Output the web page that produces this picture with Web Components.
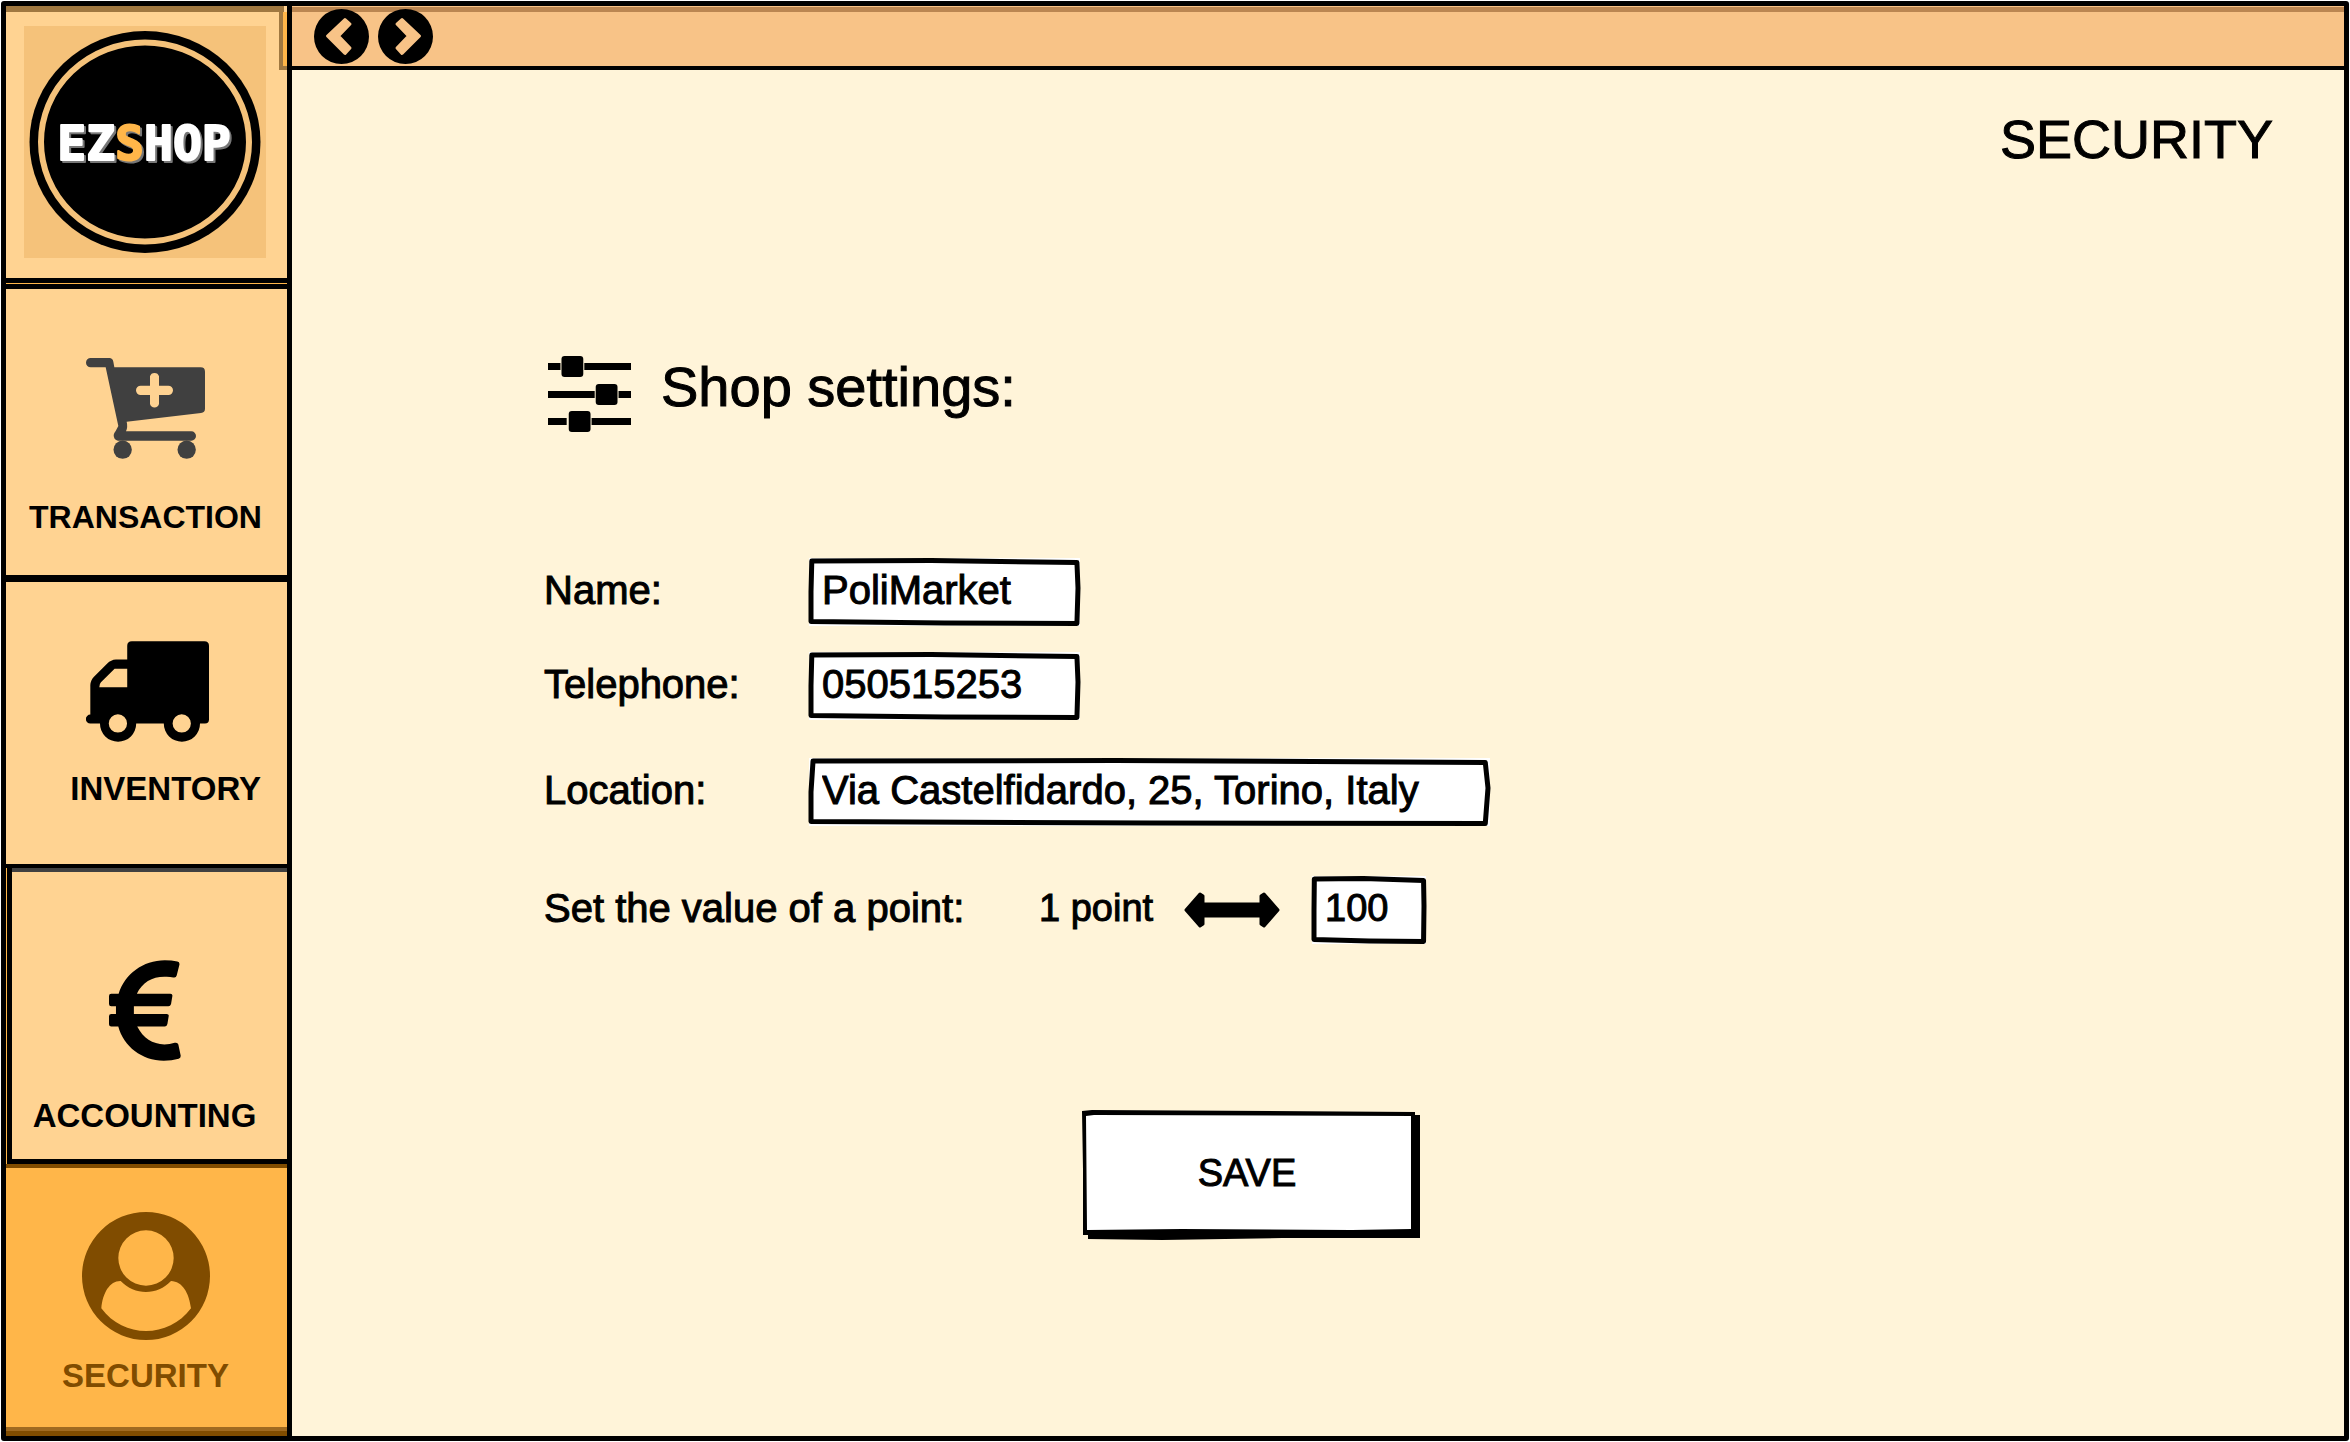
<!DOCTYPE html>
<html lang="en">
<head>
<meta charset="utf-8">
<title>EZShop - Security</title>
<style>
  body { margin: 0; background: #fff; color: #000; font-family: "Liberation Sans", Arial, sans-serif; }
</style>
</head>
<body>
<app-shell>
  <side-bar slot="side">
    <shop-logo></shop-logo>
    <nav-tile class="transaction" label="TRANSACTION">
      <svg width="119" height="101" viewBox="258 265 357 303" fill="#404040" aria-hidden="true">
        <path fill-rule="evenodd" d="M272 265H328Q338 265 340 276L343 293H602Q615 293 615 306V417Q615 428 603 430L380 456Q384 472 378 485H574A14 14 0 0 1 574 513H354Q341 511 341 496Q342 490 347 484L355 469L317 293H272A14 14 0 0 1 272 265ZM450 320V348H422A14 14 0 0 0 422 376H450V403A14 14 0 0 0 477 403V376H505A14 14 0 0 0 505 348H477V320A14 14 0 0 0 450 320Z"/>
        <circle cx="368" cy="540" r="27.500"/><circle cx="560" cy="540" r="27.500"/>
      </svg>
    </nav-tile>
    <nav-tile class="inventory" label="INVENTORY">
      <svg width="123" height="101" viewBox="260 211 370 303" aria-hidden="true">
        <path fill-rule="evenodd" d="M398 211H616Q630 211 630 225V447Q630 459 618 459H603A54.500 54.500 0 0 1 494 459H411A54.500 54.500 0 0 1 302 459H273A13.500 13.500 0 0 1 273 432V343Q274 328 284 318L324 278Q335 267 350 266H384V225Q384 211 398 211ZM384 294H346L305 335Q300 340 300 350H384ZM356 431A27.500 27.500 0 1 0 356 486A27.500 27.500 0 1 0 356 431ZM548 431A27.500 27.500 0 1 0 548 486A27.500 27.500 0 1 0 548 431Z"/>
      </svg>
    </nav-tile>
    <nav-tile class="accounting" label="ACCOUNTING">
      <svg width="72" height="101" viewBox="327 327 217 303" aria-hidden="true">
        <path d="M495 327Q516 327 533 331Q541 333 539 341L531 373Q529 381 521 379Q508 376 494 377C456 377 427 395 411 428H512Q519 428 518 435L514 459Q512 466 506 466H402V489H501Q508 489 507 495L503 519Q501 527 495 527H412C430 562 458 580 494 581Q510 581 525 576Q534 574 536 581L543 614Q544 621 537 624Q516 630 492 630C426 630 371 587 355 527H334Q327 527 327 520V496Q327 489 334 489H348V466H334Q327 466 327 459V435Q327 428 334 428H356C374 369 430 327 495 327Z"/>
      </svg>
    </nav-tile>
    <nav-tile class="security" label="SECURITY" current>
      <svg width="128" height="128" viewBox="246 216 384 384" fill="#804c00" aria-hidden="true">
        <path fill-rule="evenodd" d="M438 216A192 192 0 1 1 438 600A192 192 0 1 1 438 216ZM438 271A82.500 82.500 0 1 0 438 437A82.500 82.500 0 1 0 438 271ZM362 423C330 422 308 458 304 505C370 596 506 596 573 505C567 458 547 424 513 423C472 467 404 467 362 423Z"/>
      </svg>
    </nav-tile>
  </side-bar>
  <top-bar slot="top"></top-bar>
  <settings-page slot="page"></settings-page>
</app-shell>

<script>
const define = (name, html, setup) => {
  const template = document.createElement('template');
  template.innerHTML = html;
  customElements.define(name, class extends HTMLElement {
    constructor() {
      super();
      this.attachShadow({ mode: 'open' }).append(template.content.cloneNode(true));
    }
    connectedCallback() { if (setup) setup(this, this.shadowRoot); }
  });
};

define('app-shell', `
  <style>
    :host { display: flex; box-sizing: border-box; min-height: 100vh; padding: 1px; }
    .frame { flex: 1; display: flex; border: 5px solid #000; border-radius: 3px; background: #fff4d9; }
    .column { flex: 1; min-width: 0; display: flex; flex-direction: column; }
    slot[name=side], slot[name=top], slot[name=page] { display: contents; }
  </style>
  <div class="frame">
    <slot name="side"></slot>
    <div class="column"><slot name="top"></slot><slot name="page"></slot></div>
  </div>`);

define('side-bar', `
  <style>
    :host { box-sizing: border-box; width: 286px; flex: none; display: flex; border-right: 5px solid #000; background: #ffb649; }
    nav { flex: 1; display: flex; flex-direction: column; }
  </style>
  <nav aria-label="Sections"><slot></slot></nav>`);

define('shop-logo', `
  <style>
    :host { position: relative; box-sizing: border-box; height: 277px; display: flex; justify-content: center; align-items: flex-start;
      padding: 20px 3px 0 0; background: #ffd392; border-bottom: 5px solid #000; }
    .overlap { position: absolute; top: 0; left: 0; right: 3px; height: 6px; background: #a07840; }
    .corner { position: absolute; top: 6px; right: 0; width: 8px; height: 58px; box-sizing: border-box;
      border-left: 4px solid #a07840; border-bottom: 4px solid #a07840; background: #ffb649; }
    .mark { background: #f5c27a; display: block; }
    text { font: 700 48px "DejaVu Sans Mono", monospace; stroke-width: 2px; stroke-linejoin: round; }
  </style>
  <svg class="mark" width="242" height="232" viewBox="0 0 242 232" role="img" aria-label="EZSHOP">
    <ellipse cx="121" cy="116" rx="115.500" ry="111"/>
    <ellipse cx="121" cy="116" rx="104" ry="99.500" fill="none" stroke="#f5c27a" stroke-width="6"/>
    <text x="120" y="134" text-anchor="middle" fill="#fff" stroke="#fff" style="filter: drop-shadow(2px 2px 0 #777)">EZ<tspan fill="#ffb649" stroke="#ffb649">S</tspan>HOP</text>
  </svg>
  <div class="overlap"></div><div class="corner"></div>`);

define('nav-tile', `
  <style>
    :host { box-sizing: border-box; flex: none; display: flex; background: #ffd392; }
    a { flex: 1; box-sizing: border-box; display: flex; flex-direction: column; align-items: center; color: #000; text-decoration: none; }
    span { font-size: 33px; line-height: 36px; font-weight: 700; }
    :host(.transaction) { height: 298px; border: solid #000; border-width: 5px 0 7px; margin-top: 1px; }
    :host(.transaction) a { padding: 69px 2px 0 0; gap: 40px; }
    :host(.transaction) span { font-size: 32px; }
    :host(.inventory) { height: 286px; border-bottom: 4px solid #000; }
    :host(.inventory) a { padding: 59px 0 0 2px; gap: 29px; }
    :host(.inventory) span { align-self: flex-end; padding-right: 26px; }
    :host(.accounting) { height: 296px; margin-left: 1px; border: solid #000; border-width: 0 0 5px 5px; }
    :host(.accounting) a { padding: 88px 10px 0 0; gap: 37px; border-top: 4px solid #404040; }
    :host(.security) { flex: 1; background: #ffb649; border: solid #804c00; border-width: 4px 0 5px; }
    :host(.security) a { padding: 44px 2px 0 0; gap: 18px; color: #804c00; border-bottom: 4px solid #a06a20; }
  </style>
  <a href="#"><slot></slot><span></span></a>`,
  (host, root) => {
    root.querySelector('span').textContent = host.getAttribute('label');
    if (host.hasAttribute('current')) root.querySelector('a').setAttribute('aria-current', 'page');
  });

define('top-bar', `
  <style>
    :host { box-sizing: border-box; flex: none; height: 64px; display: flex; align-items: center; gap: 9px; padding-left: 22px;
      background: linear-gradient(#f8c387 1px, #bb8651 1px, #bb8651 6px, #f8c387 6px); border-bottom: 4px solid #000; }
    button { width: 55px; height: 55px; padding: 0; border: 0; background: none; cursor: pointer; }
    svg { display: block; }
  </style>
  <button type="button" aria-label="Back"><svg width="55" height="55" viewBox="0 0 55 55"><circle cx="27.500" cy="27.500" r="27.500"/><path d="M31 10.500L36 15L24.500 27L36 39L31 44.500L13.500 27Z" fill="#f8c387" stroke="#f8c387" stroke-width="3" stroke-linejoin="round"/></svg></button>
  <button type="button" aria-label="Forward"><svg width="55" height="55" viewBox="0 0 55 55"><circle cx="27.500" cy="27.500" r="27.500"/><path d="M24 10.500L19 15L30.500 27L19 39L24 44.500L41.500 27Z" fill="#f8c387" stroke="#f8c387" stroke-width="3" stroke-linejoin="round"/></svg></button>`);

/* A white box with a hand-inked outline; the text box shares its grid cell. */
const inkBox = `
  .ink { display: grid; height: 68px; width: var(--box, 271px); max-width: 100%; flex: none; background: #fff; }
  .ink > * { grid-area: 1 / 1; height: 68px; box-sizing: border-box; min-width: 0; }
  .ink svg { width: calc(100% - 4px); margin: 0 2px; overflow: visible; }
  .ink path { fill: none; stroke: #000; stroke-width: 5px; stroke-linejoin: round; vector-effect: non-scaling-stroke; }
  .ink input { width: 100%; border: 0; margin: 0; background: none; padding: 0 10px 4px 13px; font: inherit; color: inherit; outline: none; -webkit-text-stroke: inherit; }
  label, span { line-height: 64px; white-space: nowrap; }
`;
const inkOutline = `
  <svg viewBox="0 0 100 68" preserveAspectRatio="none" aria-hidden="true">
    <path d="M0.300 3L45 2.500L99.600 4.500L100 30L99.600 65.500L50 65L0 63.500L0 34Z"/>
  </svg>`;

define('ink-field', `
  <style>
    :host { display: flex; align-items: flex-start; font-size: 40px; -webkit-text-stroke: 1px #000; }
    label { width: 265px; flex: none; }
    ${inkBox}
  </style>
  <label for="value"></label>
  <div class="ink">${inkOutline}<input id="value" type="text"></div>`,
  (host, root) => {
    root.querySelector('label').textContent = host.getAttribute('label');
    root.querySelector('input').value = host.getAttribute('value');
  });

define('point-field', `
  <style>
    :host { display: flex; align-items: flex-start; font-size: 40px; -webkit-text-stroke: 1px #000; --box: 114px; }
    label { width: 495px; flex: none; }
    span { width: 145px; font-size: 38px; }
    .arrow { align-self: center; margin-right: 32px; }
    .ink { font-size: 38px; }
    ${inkBox}
  </style>
  <label for="value">Set the value of a point:</label>
  <span>1 point</span>
  <svg class="arrow" width="96" height="36" viewBox="0 0 96 36" aria-hidden="true"><path stroke="#000" stroke-width="3" stroke-linejoin="round" d="M2 18L16 2L19 4V12H77V4L80 2L94 18L80 34L77 32V24H19V32L16 34Z"/></svg>
  <div class="ink">${inkOutline}<input id="value" type="text" value="100"></div>`);

define('save-button', `
  <style>
    :host { display: block; width: 338px; }
    button { display: grid; width: 100%; height: 130px; padding: 0; border: 0; background: none; color: #000;
      font: 38px "Liberation Sans", Arial, sans-serif; -webkit-text-stroke: 1px #000; cursor: pointer; }
    button > * { grid-area: 1 / 1; width: 100%; }
    span { box-sizing: border-box; height: 130px; line-height: 126px; padding-right: 8px; text-align: center; }
  </style>
  <button type="button">
    <svg height="130" viewBox="0 0 338 130" preserveAspectRatio="none" aria-hidden="true">
      <path d="M0 1L10 0L333 2V5H338V128L200 128L80 130L6 129V125H1L1 60Z"/>
      <path fill="#fff" d="M4 6L12 5L329 6V119L270 120L100 119L5 120Z"/>
    </svg>
    <span><slot></slot></span>
  </button>`);

define('settings-page', `
  <style>
    :host { flex: 1; display: block; }
    main { display: flex; flex-direction: column; padding: 38px 71px 40px 252px; }
    h1, h2 { margin: 0; line-height: 62px; font-weight: 400; -webkit-text-stroke: 1px #000; }
    h1 { font-size: 54px; text-align: right; }
    h2 { font-size: 56px; }
    header { display: flex; align-items: flex-start; gap: 30px; margin-top: 186px; padding-left: 4px; }
    form { display: flex; flex-direction: column; margin-top: 126px; }
    .phone { margin-top: 26px; }
    .place { margin-top: 38px; --box: 681px; }
    point-field { margin-top: 50px; }
    save-button { margin: 166px 0 0 538px; }
  </style>
  <main>
    <h1>SECURITY</h1>
    <header>
      <svg width="83" height="76" viewBox="0 0 80 76" preserveAspectRatio="none" aria-hidden="true">
        <path d="M0 7H12V14H0ZM35 7H80V14H35ZM0 35H45V42H0ZM68 35H80V42H68ZM0 62H18V69H0ZM42 62H80V69H42Z"/>
        <rect x="13" y="0" width="21" height="21" rx="3"/><rect x="46" y="28" width="21" height="21" rx="3"/><rect x="20" y="55" width="21" height="21" rx="3"/>
      </svg>
      <h2>Shop settings:</h2>
    </header>
    <form>
      <ink-field label="Name:" value="PoliMarket"></ink-field>
      <ink-field class="phone" label="Telephone:" value="050515253"></ink-field>
      <ink-field class="place" label="Location:" value="Via Castelfidardo, 25, Torino, Italy"></ink-field>
      <point-field></point-field>
      <save-button>SAVE</save-button>
    </form>
  </main>`);
</script>
</body>
</html>
